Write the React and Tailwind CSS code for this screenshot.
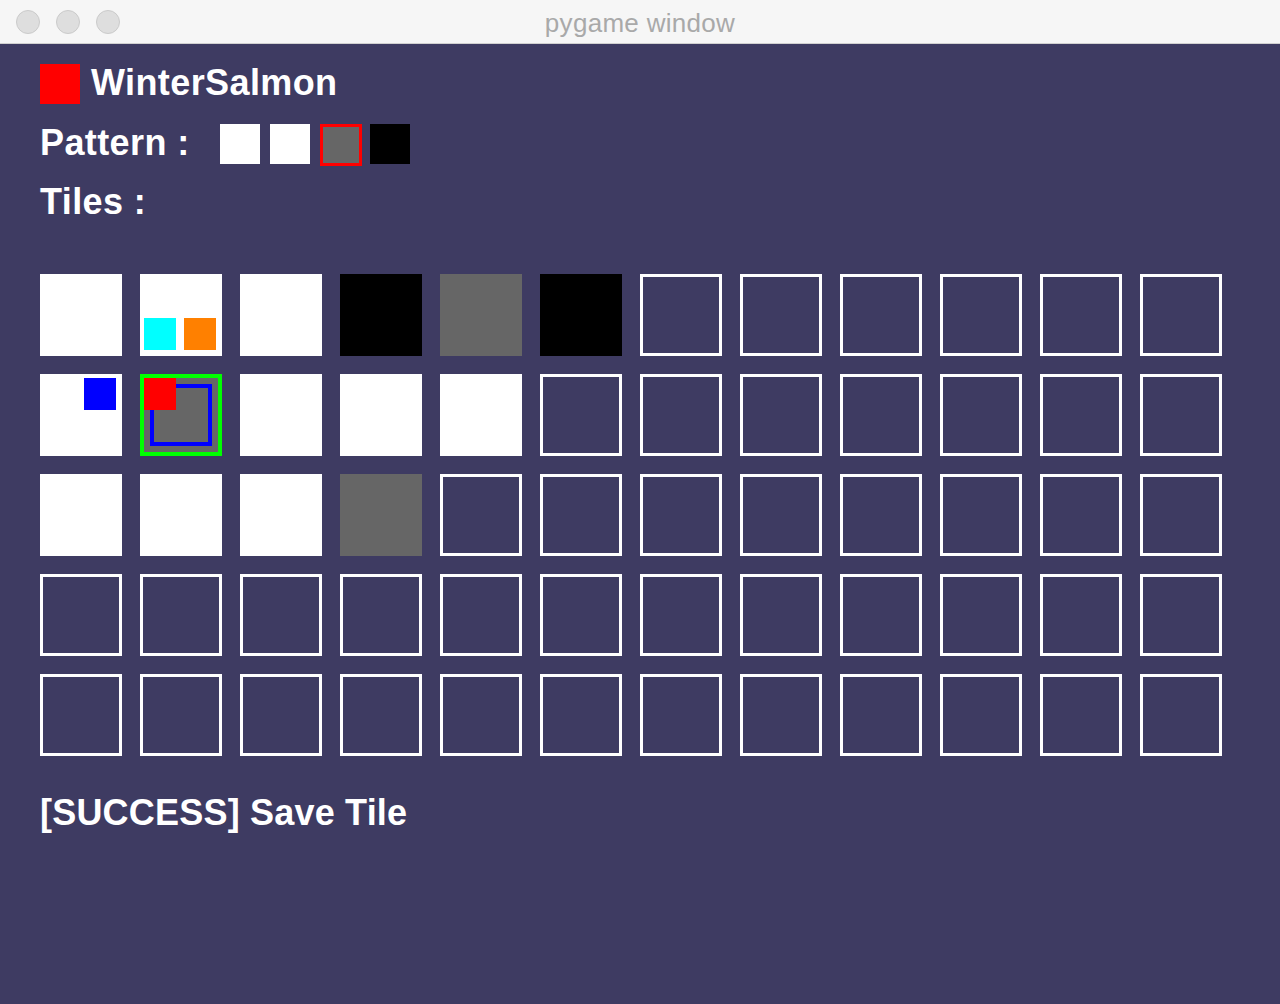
const W = "w";
const K = "k";
const G = "g";
const E = "e";

// tile grid, 12 per row
const rows = [
  [W, "wco", W, K, G, K, E, E, E, E, E, E],
  ["wb", "sel", W, W, W, E, E, E, E, E, E, E],
  [W, W, W, G, E, E, E, E, E, E, E, E],
  [E, E, E, E, E, E, E, E, E, E, E, E],
  [E, E, E, E, E, E, E, E, E, E, E, E],
];

const Tile = ({ kind }) => {
  if (kind === E) {
    return <div className="w-[82px] h-[82px] border-[3px] border-white" />;
  }
  if (kind === K) {
    return <div className="w-[82px] h-[82px] bg-black" />;
  }
  if (kind === G) {
    return <div className="w-[82px] h-[82px] bg-[#666666]" />;
  }
  if (kind === "wco") {
    return (
      <div className="relative w-[82px] h-[82px] bg-white">
        <div className="absolute left-[4px] top-[44px] w-[32px] h-[32px] bg-[#00ffff]" />
        <div className="absolute left-[44px] top-[44px] w-[32px] h-[32px] bg-[#ff8000]" />
      </div>
    );
  }
  if (kind === "wb") {
    return (
      <div className="relative w-[82px] h-[82px] bg-white">
        <div className="absolute left-[44px] top-[4px] w-[32px] h-[32px] bg-[#0000ff]" />
      </div>
    );
  }
  if (kind === "sel") {
    return (
      <div className="relative w-[82px] h-[82px] bg-[#666666] border-[4px] border-[#00ff00]">
        <div className="absolute left-[6px] top-[6px] w-[62px] h-[62px] border-[4px] border-[#0000ff]" />
        <div className="absolute left-0 top-0 w-[32px] h-[32px] bg-[#ff0000]" />
      </div>
    );
  }
  return <div className="w-[82px] h-[82px] bg-white" />;
};

export default function App() {
  return (
    <div className="w-[1280px] h-[1004px] flex flex-col bg-[#3e3b62] overflow-hidden">
      {/* window title bar */}
      <div className="relative h-[44px] flex items-center justify-center bg-[#f6f6f6] border-b border-[#d0d0d0]">
        <div className="absolute left-[16px] top-[10px] flex gap-[16px]">
          <div className="w-[24px] h-[24px] rounded-full bg-[#dedede] border border-[#cbcbcb]" />
          <div className="w-[24px] h-[24px] rounded-full bg-[#dedede] border border-[#cbcbcb]" />
          <div className="w-[24px] h-[24px] rounded-full bg-[#dedede] border border-[#cbcbcb]" />
        </div>
        <span className="font-['Liberation_Sans',sans-serif] text-[26px] tracking-[0.3px] text-[#a9a9a9] leading-none pt-[2px]">
          pygame window
        </span>
      </div>

      <div className="flex-1 flex flex-col pl-[40px] pt-[20px] font-['Liberation_Sans',sans-serif] font-bold text-white text-[36px] tracking-[0.4px]">
        <div className="flex items-start h-[40px]">
          <div className="w-[40px] h-[40px] bg-[#ff0000]" />
          <span className="ml-[11px] leading-[38px]">WinterSalmon</span>
        </div>

        <div className="flex items-start mt-[20px] h-[42px]">
          <span className="w-[180px] leading-[38px]">Pattern :</span>
          <div className="w-[40px] h-[40px] bg-white" />
          <div className="ml-[10px] w-[40px] h-[40px] bg-white" />
          <div className="ml-[10px] w-[42px] h-[42px] bg-[#666666] border-[3px] border-[#ff0000]" />
          <div className="ml-[8px] w-[40px] h-[40px] bg-black" />
        </div>

        <div className="mt-[17px] h-[34px] leading-[38px]">Tiles :</div>

        <div className="mt-[57px] flex flex-col gap-[18px]">
          {rows.map((row, r) => (
            <div key={r} className="flex gap-[18px]">
              {row.map((kind, c) => (
                <Tile key={c} kind={kind} />
              ))}
            </div>
          ))}
        </div>

        <div className="mt-[38px] leading-[38px] tracking-[0.2px]">[SUCCESS] Save Tile</div>
      </div>
    </div>
  );
}
